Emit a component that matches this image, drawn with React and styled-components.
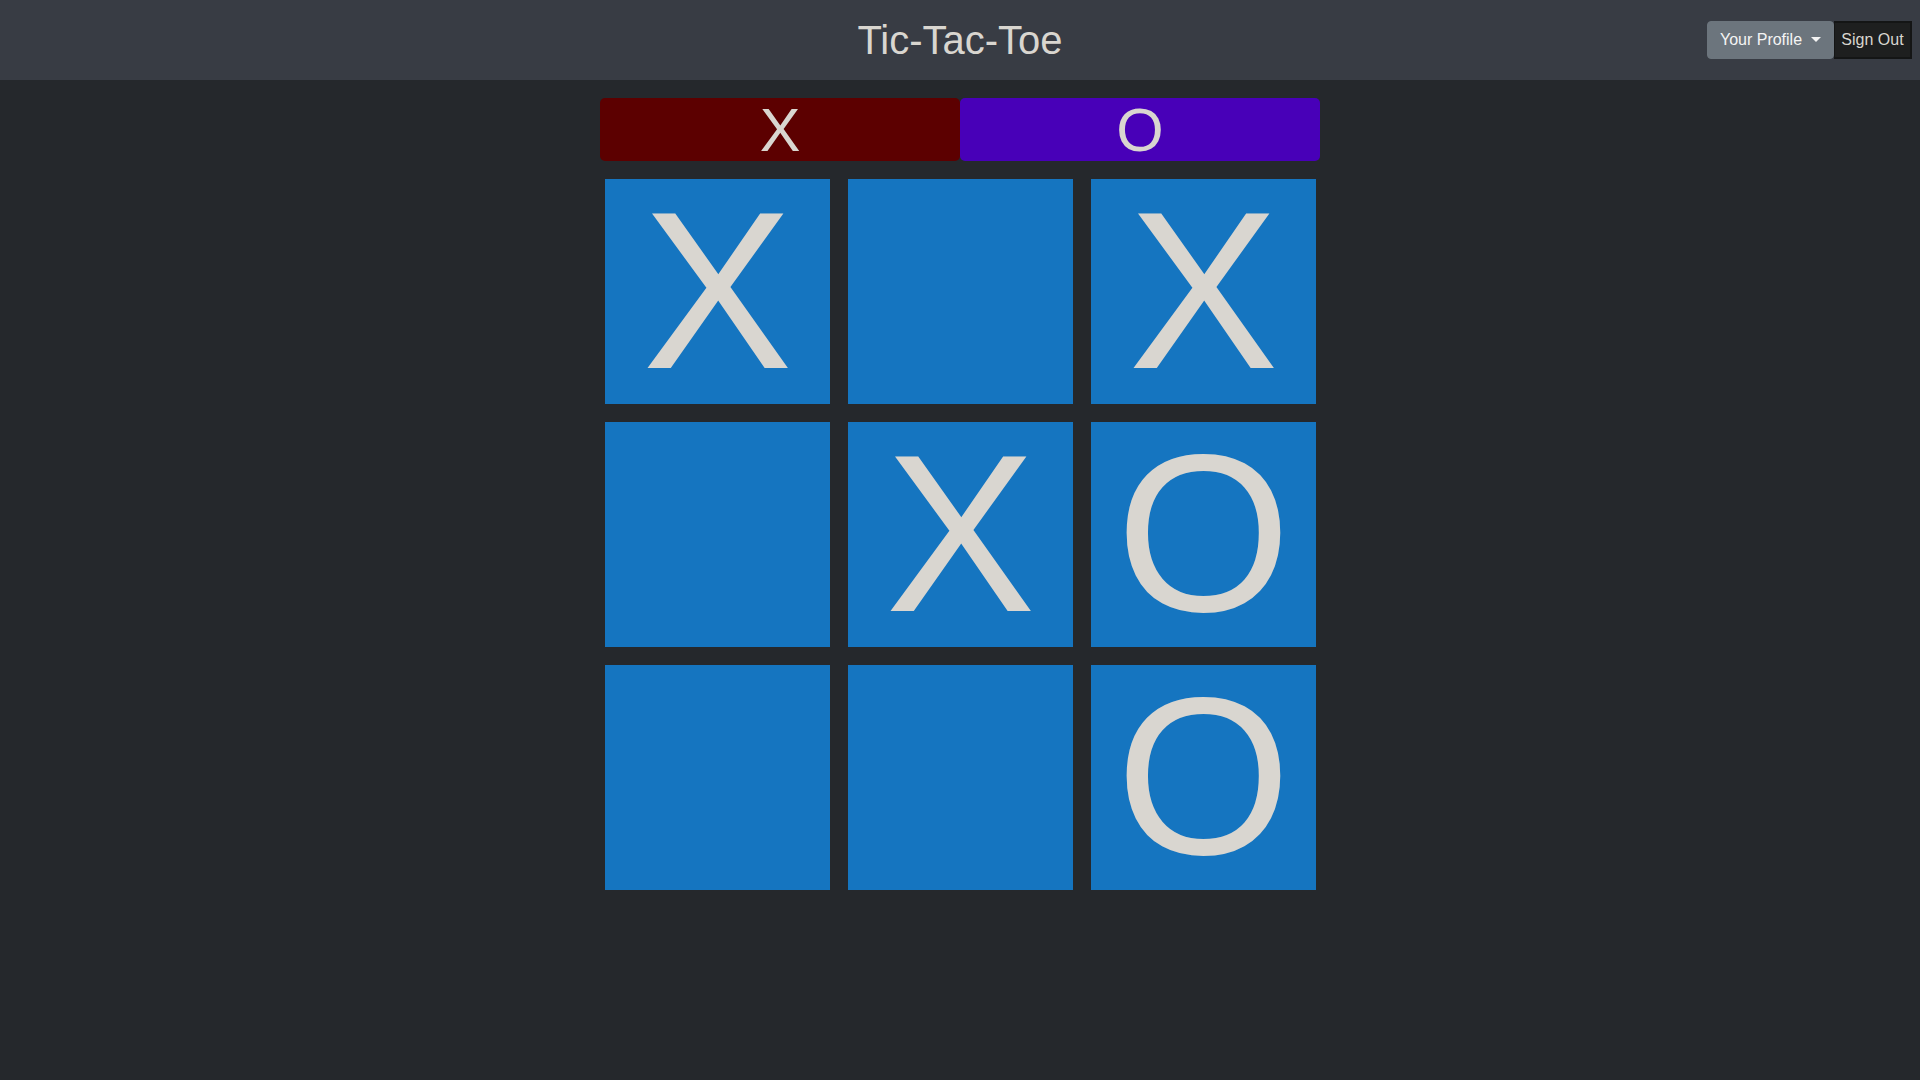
import React from 'react';
import styled, { createGlobalStyle } from 'styled-components';

const GlobalStyle = createGlobalStyle`
  html, body {
    margin: 0;
    padding: 0;
    background: #25282c;
    font-family: "Liberation Sans", Arial, sans-serif;
    color: #d9d6d0;
  }
`;

const Page = styled.div`
  min-height: 1080px;
  background: #25282c;
`;

const Header = styled.header`
  height: 80px;
  background: #383c44;
  display: grid;
  grid-template-columns: 1fr auto 1fr;
  align-items: center;
`;

const Title = styled.h1`
  grid-column: 2;
  margin: 0;
  font-size: 40px;
  font-weight: 400;
  line-height: 1.2;
  color: #d9d6d0;
`;

const Actions = styled.div`
  grid-column: 3;
  justify-self: end;
  display: flex;
  align-items: center;
  padding-right: 8px;
`;

const ProfileButton = styled.button`
  height: 38px;
  width: 127px;
  border: 1px solid #6c757d;
  border-radius: 4px;
  background: #6c757d;
  color: #f4f4f4;
  font-family: inherit;
  font-size: 16px;
  white-space: nowrap;
  display: flex;
  align-items: center;
  justify-content: center;
  padding: 0;
  cursor: pointer;

  &::after {
    content: '';
    display: inline-block;
    margin-left: 9px;
    margin-top: -2px;
    border-top: 5px solid #f4f4f4;
    border-left: 5px solid transparent;
    border-right: 5px solid transparent;
  }
`;

const SignOutButton = styled.button`
  height: 38px;
  width: 78px;
  border: 2px solid #141515;
  border-left-width: 1px;
  background: #1e1f1f;
  color: #d9d6d0;
  font-family: inherit;
  font-size: 16px;
  white-space: nowrap;
  padding: 0;
  cursor: pointer;
`;

const Main = styled.main`
  width: 720px;
  margin: 18px auto 0;
  display: flex;
  flex-direction: column;
  gap: 18px;
`;

const PlayerBar = styled.div`
  display: flex;
  height: 63px;
`;

const Player = styled.div`
  flex: 1;
  background: ${(p) => p.$color};
  border-radius: 5px;
  display: flex;
  align-items: center;
  justify-content: center;
  font-size: 61px;
  line-height: 1;
  color: #d9d6d0;
  padding-top: 2px;
`;

const Board = styled.div`
  display: grid;
  grid-template-columns: repeat(3, 225px);
  grid-auto-rows: 225px;
  gap: 18px;
  padding: 0 5px;
`;

const Cell = styled.div`
  background: #1575c0;
  display: flex;
  align-items: center;
  justify-content: center;
  font-size: 225px;
  line-height: 1;
  color: #d9d6d0;
  padding-bottom: 3px;
  box-sizing: border-box;
`;

const board = ['X', '', 'X', '', 'X', 'O', '', '', 'O'];

export default function App() {
  return (
    <Page>
      <GlobalStyle />
      <Header>
        <Title>Tic-Tac-Toe</Title>
        <Actions>
          <ProfileButton>Your Profile</ProfileButton>
          <SignOutButton>Sign Out</SignOutButton>
        </Actions>
      </Header>
      <Main>
        <PlayerBar>
          <Player $color="#5c0000">X</Player>
          <Player $color="#4800b8">O</Player>
        </PlayerBar>
        <Board>
          {board.map((v, i) => (
            <Cell key={i}>{v}</Cell>
          ))}
        </Board>
      </Main>
    </Page>
  );
}
